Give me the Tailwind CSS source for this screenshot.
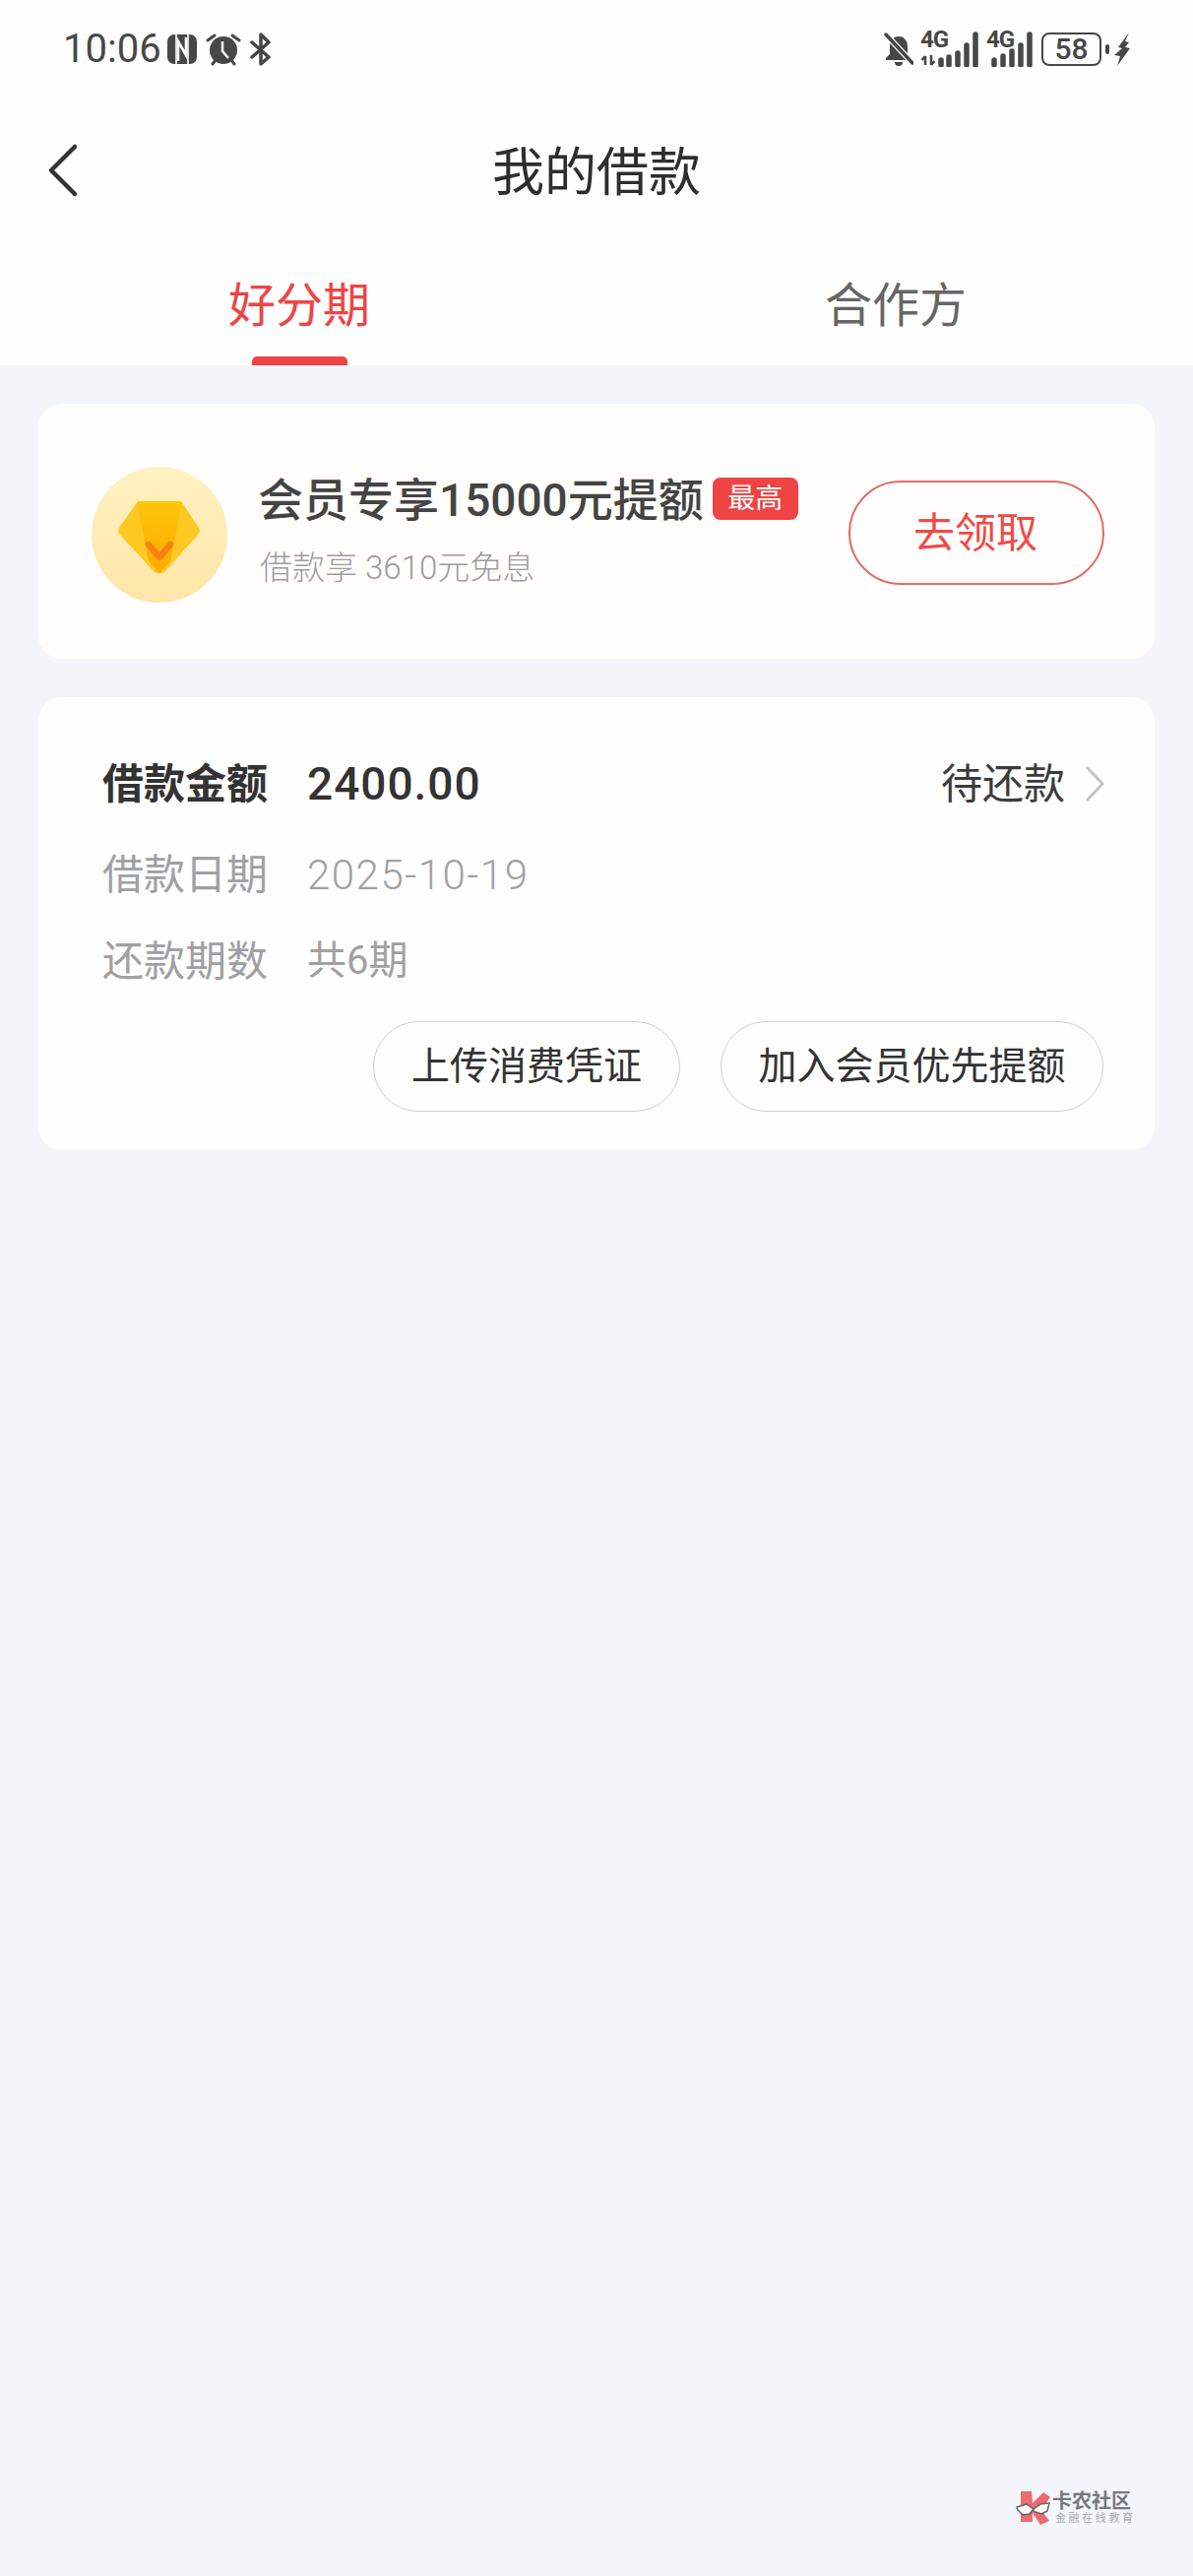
<!DOCTYPE html>
<html lang="zh-CN">
<head>
<meta charset="utf-8">
<script src="https://cdn.jsdelivr.net/npm/@tailwindcss/browser@4"></script>
</head>
<body class="relative w-[1212px] h-[2616px] overflow-hidden bg-[#f3f5fa] font-['Roboto','Noto_Sans_CJK_SC',sans-serif] text-[#333333]">
  <header class="bg-[#fefefe] h-[371px] flex flex-col">
    <div class="h-[100px] pl-[64px] pr-[64px] flex items-center justify-between text-[#474747]">
      <div class="flex items-center">
        <span class="text-[40px] leading-none w-[106px] whitespace-nowrap">10:06</span>
        <svg class="w-[30px] h-[30px]" viewBox="0 0 30 30"><rect width="30" height="30" rx="7" fill="#474747"/><path d="M9 0v30M21 0v30" stroke="#fefefe" stroke-width="1.6"/><path d="M11 27V7l8 14V3" stroke="#fefefe" stroke-width="2.6" fill="none"/></svg>
        <svg class="w-[36px] h-[34px] ml-[9px]" viewBox="0 0 36 34"><circle cx="18" cy="18" r="14" fill="#474747"/><path d="M17 9v10l6 7" stroke="#fefefe" stroke-width="2.5" fill="none"/><path d="M2 8l7-5M34 8l-7-5M7 32l3-4M29 32l-3-4" stroke="#474747" stroke-width="3" stroke-linecap="round"/></svg>
        <svg class="w-[22px] h-[34px] ml-[9px]" viewBox="0 0 22 34"><path d="M2 25L19 10 11 2v30l8-7L2 10" stroke="#474747" stroke-width="3.5" fill="none" stroke-linejoin="round" stroke-linecap="round"/></svg>
      </div>
      <div class="flex items-center">
        <svg class="w-[30px] h-[34px]" viewBox="0 0 30 34"><path d="M15 4c-6 0-9 5-9 10v8l-4 4v2h26v-2l-4-4v-8c0-5-3-10-9-10z" fill="#474747"/><path d="M11 30a4 4 0 0 0 8 0z" fill="#474747"/><path d="M2 2l27 29" stroke="#fefefe" stroke-width="6"/><path d="M2 2l27 29" stroke="#474747" stroke-width="3.5" stroke-linecap="round"/></svg>
        <div class="relative w-[60px] h-[36px] ml-[7px]">
          <span class="absolute left-0 top-[-3px] text-[24px] leading-[23px] font-bold tracking-[-1px] text-[#474747]">4G</span>
          <svg class="w-[60px] h-[36px]" viewBox="0 0 60 36">
            <path d="M5 25v9M5 25l-3.500 4M11 34V24M11 34l3.500-4" stroke="#474747" stroke-width="2.500" fill="none"/>
            <path d="M21 29v5M29 26v8M38 22v12M47 14v20M56 3v31" stroke="#474747" stroke-width="5.5" stroke-linecap="round"/>
          </svg>
        </div>
        <div class="relative w-[48px] h-[36px] ml-[7px]">
          <span class="absolute left-0 top-[-3px] text-[24px] leading-[23px] font-bold tracking-[-1px] text-[#474747]">4G</span>
          <svg class="w-[48px] h-[36px]" viewBox="0 0 48 36">
            <path d="M8 29v5M17 25v9M26 20v14M35 14v20M44 3v31" stroke="#474747" stroke-width="5.5" stroke-linecap="round"/>
          </svg>
        </div>
        <div class="ml-[8px] w-[61px] h-[34px] rounded-[8px] border-[2.5px] border-[#474747] flex items-center justify-center text-[30px] leading-none font-medium text-[#474747]">58</div>
        <div class="ml-[4px] w-[4px] h-[10px] rounded-[2px] bg-[#474747]"></div>
        <svg class="w-[16px] h-[34px] ml-[5px]" viewBox="0 0 16 34"><path d="M15 0L4 15l4 1L0 23l6 1-3 10L16 16l-5-1 4-5-4-1z" fill="#474747"/></svg>
      </div>
    </div>
    <div class="h-[146px] relative flex items-center justify-center">
      <svg class="absolute left-[48px] top-[45px] w-[32px] h-[56px]" viewBox="0 0 32 56"><path d="M28 4L4 28l24 24" stroke="#333333" stroke-width="4.500" fill="none" stroke-linecap="round" stroke-linejoin="round"/></svg>
      <h1 class="mt-[6px] text-[53px] leading-none font-normal text-[#2e2e2e]">我的借款</h1>
    </div>
    <div class="flex flex-1 pt-[33px]">
      <div class="w-[606px]">
        <div class="w-fit ml-[232px] flex flex-col items-center">
          <span class="text-[48px] leading-[64px] text-[#ef4444] whitespace-nowrap">好分期</span>
          <span class="mt-[19px] w-[97px] h-[9px] rounded-t-[5px] bg-[#ef4444]"></span>
        </div>
      </div>
      <div class="w-[606px]">
        <span class="ml-[232px] text-[48px] leading-[64px] text-[#666666] whitespace-nowrap">合作方</span>
      </div>
    </div>
  </header>

  <main class="px-[39px] pt-[39px] flex flex-col gap-[39px]">
    <section class="h-[259px] rounded-[24px] bg-[#fffefc] pl-[54px] pr-[51px] flex items-center">
      <svg class="mt-[6px] w-[138px] h-[138px] shrink-0" viewBox="0 0 138 138">
        <defs>
          <linearGradient id="disc" x1="0" y1="0" x2="0" y2="1"><stop offset="0" stop-color="#fff2c2"/><stop offset="1" stop-color="#ffe5a8"/></linearGradient>
          <linearGradient id="gem" x1="0" y1="0" x2="0" y2="1"><stop offset="0" stop-color="#ffc60a"/><stop offset="1" stop-color="#ffaa00"/></linearGradient>
        </defs>
        <circle cx="69" cy="69" r="69" fill="url(#disc)"/>
        <path d="M50 35h38a6 6 0 0 1 5 3l16 24a6 6 0 0 1-1 7L75 106a8 8 0 0 1-12 0L29 69a6 6 0 0 1-1-7l17-24a6 6 0 0 1 5-3z" fill="#fdc921"/>
        <path d="M46 36a5 5 0 0 1 4-1h38a5 5 0 0 1 4 1L80 96 69 108 58 96z" fill="url(#gem)"/>
        <path d="M58 79l11 13 11-13" stroke="#f98015" stroke-width="6.500" fill="none" stroke-linecap="round" stroke-linejoin="round"/>
      </svg>
      <div class="ml-[31px] flex-1 flex flex-col">
        <div class="flex items-center">
          <span class="text-[46px] leading-[60px] font-medium text-[#444444] whitespace-nowrap">会员专享15000元提额</span>
          <span class="mt-[-3px] ml-[9px] w-[87px] h-[43px] rounded-[8px] bg-[#ee4444] text-white text-[28px] leading-[43px] text-center">最高</span>
        </div>
        <span class="mt-[14px] ml-[2px] text-[33px] leading-[50px] font-light text-[#9c9ca0] whitespace-nowrap">借款享 3610元免息</span>
      </div>
      <button class="mt-[3px] shrink-0 w-[260px] h-[106px] rounded-full border-2 border-[#e26a68] pr-[2px] text-[42px] text-[#ee4b4b]">去领取</button>
    </section>

    <section class="h-[460px] rounded-[24px] bg-[#fefefe] pl-[65px] pr-[51px] pt-[55px] flex flex-col">
      <div class="flex items-center h-[66px]">
        <span class="w-[208px] text-[42px] font-bold text-[#333333]">借款金额</span>
        <span class="text-[46px] font-medium tracking-[1px] text-[#333333]">2400.00</span>
        <span class="ml-auto text-[42px] text-[#3c3c3c]">待还款</span>
        <svg class="ml-[20px] w-[20px] h-[38px]" viewBox="0 0 20 38"><path d="M2 2l16 17L2 36" stroke="#c4c4c4" stroke-width="3" fill="none"/></svg>
      </div>
      <div class="flex items-center h-[66px] mt-[26px] text-[#a0a0a3]">
        <span class="w-[208px] text-[42px]">借款日期</span>
        <span class="text-[42px] font-light tracking-[1.5px]">2025-10-19</span>
      </div>
      <div class="flex items-center h-[66px] mt-[22px] text-[#a0a0a3]">
        <span class="w-[208px] text-[42px]">还款期数</span>
        <span class="text-[40px]">共6期</span>
      </div>
      <div class="mt-[28px] pr-[1px] flex justify-end gap-[41px]">
        <button class="w-[312px] h-[92px] rounded-full border border-[#d0d0d0] text-[39px] text-[#333333]">上传消费凭证</button>
        <button class="w-[389px] h-[92px] rounded-full border border-[#d0d0d0] text-[39px] text-[#333333]">加入会员优先提额</button>
      </div>
    </section>
  </main>

  <div class="absolute left-[1032px] top-[2529px] flex items-center">
    <svg class="w-[36px] h-[36px]" viewBox="0 0 36 36">
      <path d="M5 1h11l1 12L28 2l7 5-9 13 8 11-9 4-8-12v9H5z" fill="#ee6b70"/>
      <path d="M1 17l10-3 7 5 7-5 9-1-2 8-6 3-6-2-3-2-3 4-7 1-5-5z" fill="#fff" stroke="#666666" stroke-width="1.500"/>
    </svg>
    <div class="ml-[1px] flex flex-col w-[80px]">
      <span class="text-[20px] leading-[20px] font-bold text-[#77777c] whitespace-nowrap">卡农社区</span>
      <span class="mt-[1px] ml-[3px] text-[11px] leading-[14px] tracking-[2.6px] text-[#a9a9ad] whitespace-nowrap">金融在线教育</span>
    </div>
  </div>
</body>
</html>
